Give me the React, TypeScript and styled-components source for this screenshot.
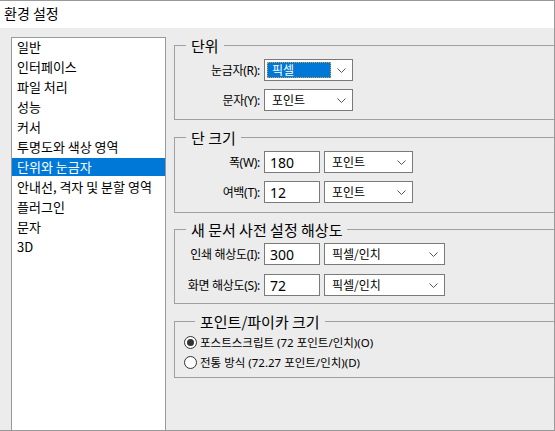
import styled, { createGlobalStyle } from "styled-components";

// 전역
const GlobalStyle = createGlobalStyle`
  html, body {
    margin: 0;
    padding: 0;
    background: #ffffff;
  }
  body {
    font-family: "Noto Sans", "Noto Sans CJK KR", sans-serif;
    color: #000;
  }
  * {
    box-sizing: border-box;
  }
`;

// 창
const Window = styled.div`
  width: 555px;
  height: 431px;
  display: flex;
  flex-direction: column;
  border-top: 1px solid #999;
  border-right: 1px solid #999;
  border-bottom: 1px solid #999;
  background: #ececec;
  overflow: hidden;
`;
const TitleBar = styled.div`
  flex: none;
  height: 27px;
  display: flex;
  align-items: center;
  padding: 0 0 3px 4px;
  background: #fff;
  font-size: 14px;
  font-family: "Noto Sans CJK KR", sans-serif;
`;
const Body = styled.div`
  flex: 1;
  min-height: 0;
  display: flex;
  padding: 9px 0 0 11px;
`;

// 왼쪽 목록
const Menu = styled.ul`
  flex: none;
  width: 155px;
  margin: 0;
  padding: 0;
  list-style: none;
  background: #fff;
  border: 1px solid #999;
  border-bottom: none;
`;
const MenuItem = styled.li<{ $active?: boolean }>`
  height: 18px;
  line-height: 18px;
  margin-bottom: 2px;
  padding-left: 5px;
  font-size: 13px;
  white-space: nowrap;
  font-family: "Noto Sans CJK KR", sans-serif;
  background: ${p => (p.$active ? "#0078d7" : "transparent")};
  color: ${p => (p.$active ? "#fff" : "#000")};
`;

// 오른쪽 설정
const Panel = styled.div`
  flex: 1;
  min-width: 0;
  display: flex;
  flex-direction: column;
  padding-left: 8px;
`;
const Group = styled.fieldset<{ $top: number; $pad: string }>`
  margin: ${p => p.$top}px -20px 0 0;
  padding: ${p => p.$pad};
  min-width: 0;
  border: 1px solid #a0a0a0;
`;
const Legend = styled.legend`
  margin-left: 11px;
  padding: 0 5px;
  height: 17px;
  line-height: 17px;
  font-size: 15px;
  font-family: "Noto Sans CJK KR", sans-serif;
`;
const Form = styled.div<{ $gap: number }>`
  display: grid;
  grid-template-columns: 85px auto auto;
  justify-content: start;
  align-items: center;
  column-gap: 4px;
  row-gap: ${p => p.$gap}px;
`;
const Label = styled.label`
  justify-self: end;
  font-size: 12px;
  letter-spacing: -0.3px;
  white-space: nowrap;
  font-family: "Noto Sans", "Noto Sans CJK KR", sans-serif;
`;
const Field = styled.div`
  width: 56px;
  height: 22px;
  display: flex;
  align-items: center;
  padding-left: 5px;
  background: #fff;
  border: 1px solid #7a7a7a;
  font-size: 14px;
`;
const Select = styled.div<{ $width: number; $wide?: boolean }>`
  width: ${p => p.$width}px;
  height: 22px;
  display: flex;
  align-items: center;
  justify-content: space-between;
  padding: 2px 6px 2px 2px;
  background: #fff;
  border: 1px solid #7a7a7a;
  grid-column: ${p => (p.$wide ? "span 2" : "auto")};
`;
const Value = styled.span<{ $focused?: boolean }>`
  flex: ${p => (p.$focused ? "none" : "1")};
  width: ${p => (p.$focused ? "64px" : "auto")};
  height: 16px;
  line-height: 14px;
  padding-left: 4px;
  font-size: 12px;
  font-family: "Noto Sans CJK KR", sans-serif;
  background: ${p => (p.$focused ? "#0078d7" : "transparent")};
  color: ${p => (p.$focused ? "#fff" : "#000")};
  border: 1px dotted ${p => (p.$focused ? "#000" : "transparent")};
  outline: 1px dotted ${p => (p.$focused ? "#e0a040" : "transparent")};
  outline-offset: -1px;
`;
const RadioList = styled.div`
  display: flex;
  flex-direction: column;
  gap: 2px;
`;
const RadioRow = styled.label`
  height: 18px;
  display: flex;
  align-items: center;
  gap: 3px;
  font-size: 11.5px;
  white-space: nowrap;
  font-family: "Noto Sans", "Noto Sans CJK KR", sans-serif;
`;
const RadioDot = styled.span<{ $checked?: boolean }>`
  width: 13px;
  height: 13px;
  flex: none;
  display: flex;
  align-items: center;
  justify-content: center;
  border-radius: 50%;
  border: 1px solid #333;
  background: #fff;

  &::after {
    content: "";
    width: 7px;
    height: 7px;
    border-radius: 50%;
    background: ${p => (p.$checked ? "#333" : "transparent")};
  }
`;

function Chevron() {
  return (
    <svg width="9" height="5" viewBox="0 0 9 5">
      <polyline points="0.5,0.5 4.5,4.5 8.5,0.5" fill="none" stroke="#555" strokeWidth="1" />
    </svg>
  );
}

function Dropdown({ width, value, focused, wide }: { width: number; value: string; focused?: boolean; wide?: boolean }) {
  return (
    <Select $width={width} $wide={wide}>
      <Value $focused={focused}>{value}</Value>
      <Chevron />
    </Select>
  );
}

// 데이터
const menu = [
  "일반",
  "인터페이스",
  "파일 처리",
  "성능",
  "커서",
  "투명도와 색상 영역",
  "단위와 눈금자",
  "안내선, 격자 및 분할 영역",
  "플러그인",
  "문자",
  "3D",
];

function App() {
  return (
    <>
      <GlobalStyle />
      <Window>
        <TitleBar>환경 설정</TitleBar>
        <Body>
          <Menu>
            {menu.map(item => (
              <MenuItem key={item} $active={item === "단위와 눈금자"}>
                {item}
              </MenuItem>
            ))}
          </Menu>
          <Panel>
            <Group $top={0} $pad="5px 0 8px">
              <Legend>단위</Legend>
              <Form $gap={8}>
                <Label>눈금자(R):</Label>
                <Dropdown width={89} value="픽셀" focused wide />
                <Label>문자(Y):</Label>
                <Dropdown width={89} value="포인트" wide />
              </Form>
            </Group>
            <Group $top={9} $pad="5px 0 9px">
              <Legend>단 크기</Legend>
              <Form $gap={8}>
                <Label>폭(W):</Label>
                <Field>180</Field>
                <Dropdown width={89} value="포인트" />
                <Label>여백(T):</Label>
                <Field>12</Field>
                <Dropdown width={89} value="포인트" />
              </Form>
            </Group>
            <Group $top={8} $pad="5px 0 7px">
              <Legend>새 문서 사전 설정 해상도</Legend>
              <Form $gap={9}>
                <Label>인쇄 해상도(I):</Label>
                <Field>300</Field>
                <Dropdown width={121} value="픽셀/인치" />
                <Label>화면 해상도(S):</Label>
                <Field>72</Field>
                <Dropdown width={121} value="픽셀/인치" />
              </Form>
            </Group>
            <Group $top={9} $pad="3px 0 6px 9px">
              <Legend>포인트/파이카 크기</Legend>
              <RadioList>
                <RadioRow>
                  <RadioDot $checked />
                  포스트스크립트 (72 포인트/인치)(O)
                </RadioRow>
                <RadioRow>
                  <RadioDot />
                  전통 방식 (72.27 포인트/인치)(D)
                </RadioRow>
              </RadioList>
            </Group>
          </Panel>
        </Body>
      </Window>
    </>
  );
}

export default App;
